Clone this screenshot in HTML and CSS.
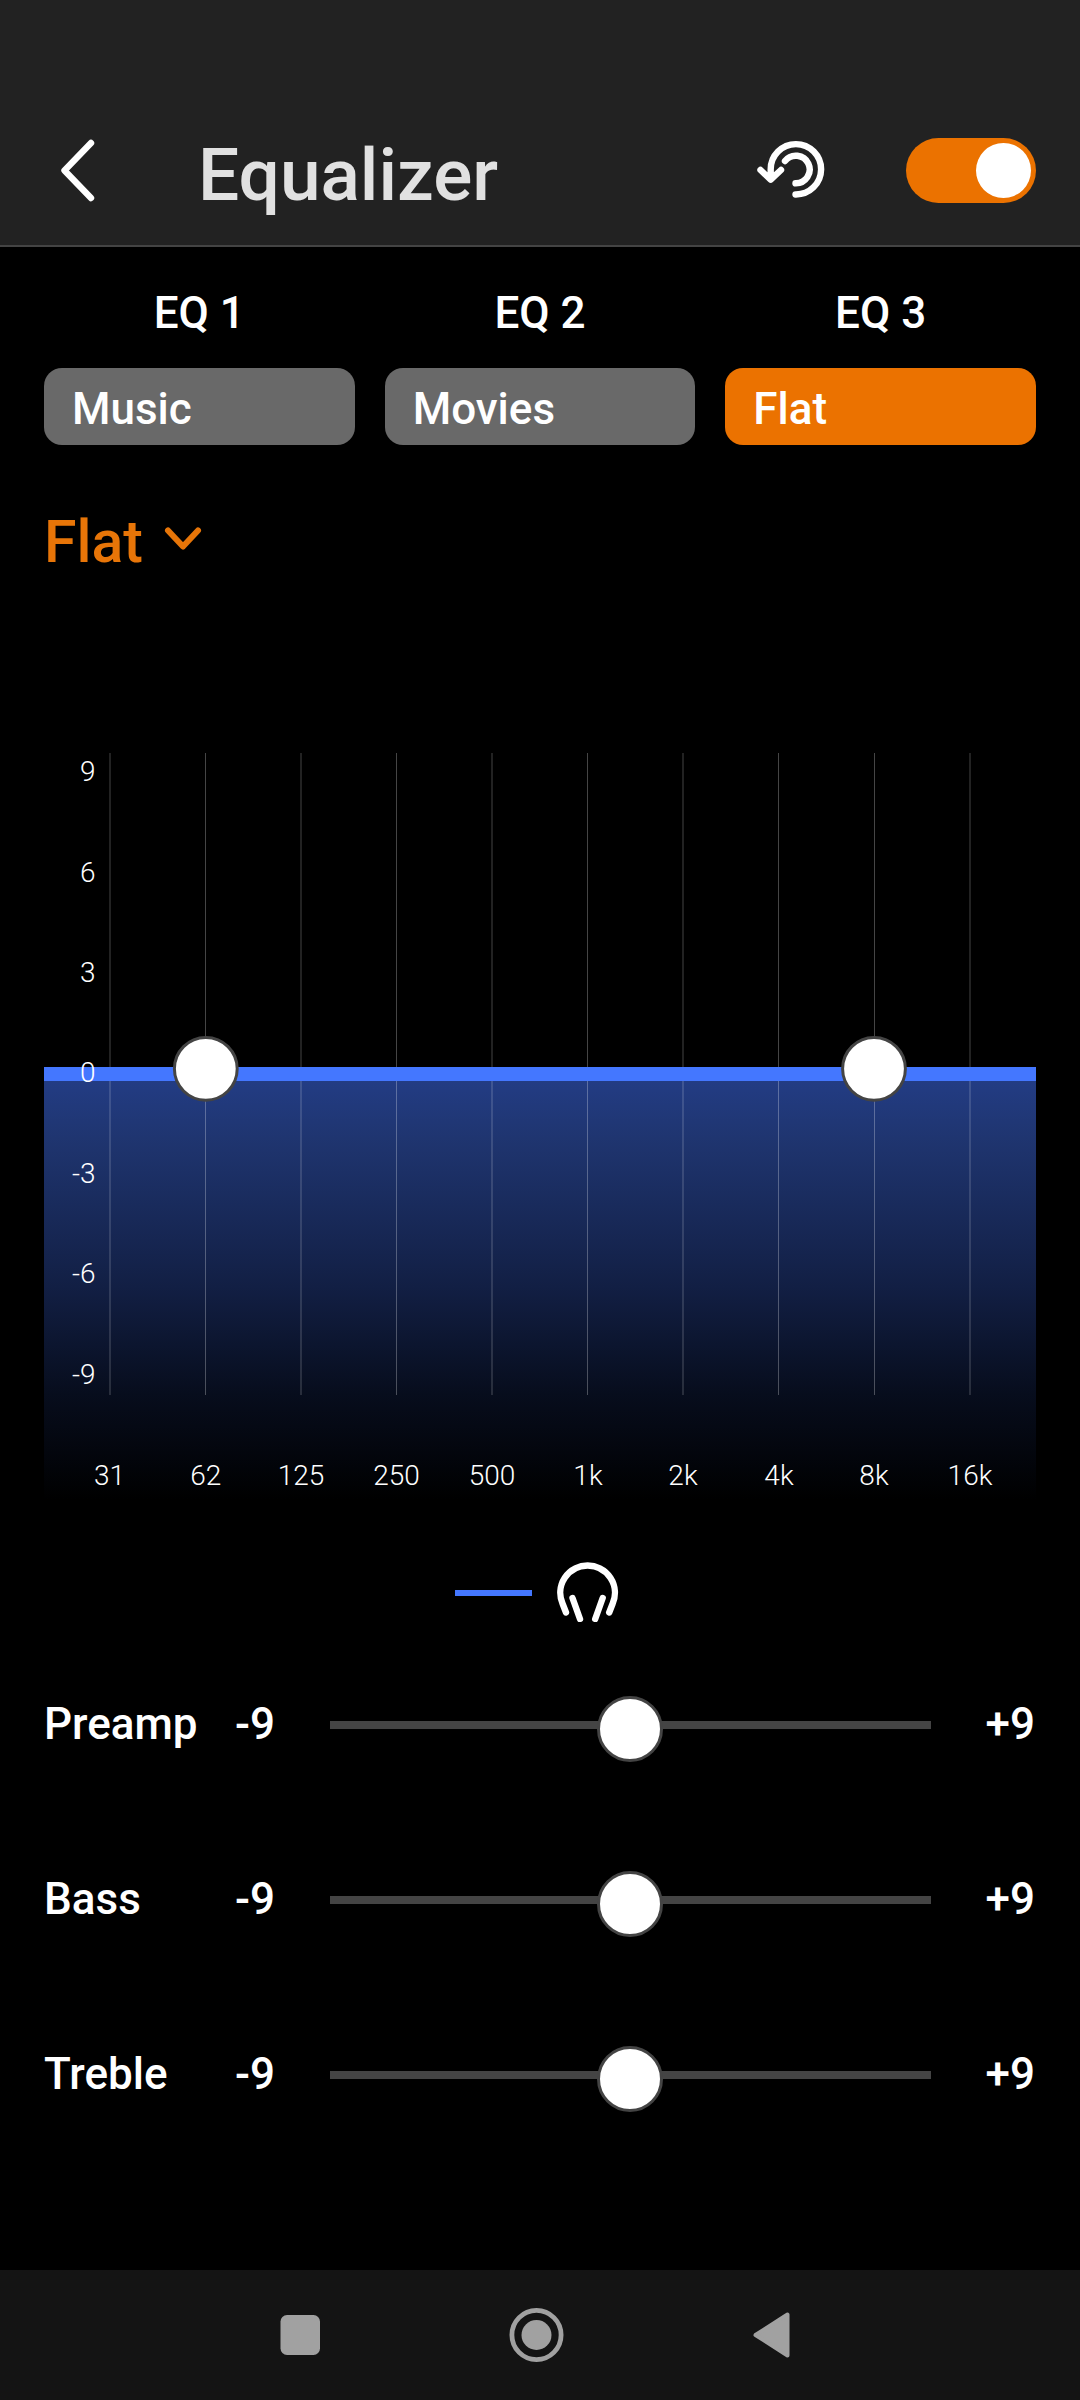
FILE: index.html
```html
<!DOCTYPE html>
<html lang="en">
<head>
<meta charset="utf-8">
<title>Equalizer</title>
<link rel="stylesheet" href="styles.css">
</head>
<body>
<header class="header">
  <svg class="back" viewBox="0 0 40 70" aria-label="Back"><path d="M31 8 4.500 35.500 31 63"/></svg>
  <h1 class="title">Equalizer</h1>
  <svg class="reset" viewBox="0 0 76 70" aria-label="Reset"><path d="M18.700 43V34.500A25.200 25.200 0 1 1 43.500 59.500M8.500 35l10.200 9.700L29 35M33 26A13.800 13.800 0 1 1 43.500 48.300"/></svg>
  <div class="toggle" role="switch" aria-checked="true"><span class="toggle-knob"></span></div>
</header>

<main class="main">
  <section class="slots">
    <div class="slot"><div class="slot-name">EQ 1</div><div class="chip">Music</div></div>
    <div class="slot"><div class="slot-name">EQ 2</div><div class="chip">Movies</div></div>
    <div class="slot"><div class="slot-name">EQ 3</div><div class="chip chip-active">Flat</div></div>
  </section>

  <div class="preset">
    <span>Flat</span>
    <svg class="caret" viewBox="0 0 38 26"><path d="M4 5.500 19 21.500 34 5.500"/></svg>
  </div>

  <svg class="chart" viewBox="44 740 992 760">
    <defs>
      <linearGradient id="fill" x1="0" y1="0" x2="0" y2="1">
        <stop offset="0" stop-color="#233d86"/>
        <stop offset=".15" stop-color="#1f3570"/>
        <stop offset=".5" stop-color="#121f44"/>
        <stop offset=".75" stop-color="#070d1d"/>
        <stop offset="1" stop-color="#000"/>
      </linearGradient>
    </defs>
    <rect x="44" y="1074" width="992" height="426" fill="url(#fill)"/>
    <path class="grid" d="M110 753V1395M205.500 753V1395M301 753V1395M396.500 753V1395M492 753V1395M587.500 753V1395M683 753V1395M778.500 753V1395M874.500 753V1395M970 753V1395"/>
    <rect x="44" y="1067" width="992" height="14" fill="#47f"/>
    <g class="gains">
      <text x="95.500" y="781">9</text>
      <text x="95.500" y="882">6</text>
      <text x="95.500" y="982">3</text>
      <text x="95.500" y="1082">0</text>
      <text x="95.500" y="1183">-3</text>
      <text x="95.500" y="1283">-6</text>
      <text x="95.500" y="1384">-9</text>
    </g>
    <g class="bands">
      <text x="109.500" y="1485">31</text>
      <text x="205.800" y="1485">62</text>
      <text x="301" y="1485">125</text>
      <text x="396.500" y="1485">250</text>
      <text x="492" y="1485">500</text>
      <text x="588" y="1485">1k</text>
      <text x="683" y="1485">2k</text>
      <text x="779" y="1485">4k</text>
      <text x="874" y="1485">8k</text>
      <text x="970" y="1485">16k</text>
    </g>
    <circle class="handle" cx="205.800" cy="1068.800" r="31.400"/>
    <circle class="handle" cx="874" cy="1068.800" r="31.400"/>
  </svg>

  <div class="legend">
    <span class="legend-line"></span>
    <svg class="headphones" viewBox="0 0 64 62"><path d="M11 52.500 7.500 43.500A27.300 27.300 0 1 1 57.700 43.500L54.200 52.500M17.500 38 25 59M47.700 38 40.200 59"/></svg>
  </div>

  <section class="sliders">
    <div class="row"><span>Preamp</span><span>-9</span><div class="track"><i class="thumb"></i></div><span class="max">+9</span></div>
    <div class="row"><span>Bass</span><span>-9</span><div class="track"><i class="thumb"></i></div><span class="max">+9</span></div>
    <div class="row"><span>Treble</span><span>-9</span><div class="track"><i class="thumb"></i></div><span class="max">+9</span></div>
  </section>
</main>

<nav class="navbar">
  <svg viewBox="0 0 60 60"><rect x="10.500" y="10" width="39.500" height="40" rx="6.500"/></svg>
  <svg viewBox="0 0 60 60"><circle class="ring" cx="30.500" cy="30" r="24.600"/><circle cx="30.500" cy="30" r="15"/></svg>
  <svg viewBox="0 0 60 60"><path class="tri" d="M14.500 30 46.500 9.500V50.500Z"/></svg>
</nav>
</body>
</html>
```
FILE: styles.css
```css
* { box-sizing: border-box; }

body {
  margin: 0;
  height: 2400px;
  display: flex;
  flex-direction: column;
  background: #000;
  color: #fff;
  font-family: Roboto, "Liberation Sans", sans-serif;
  font-size: 44px;
  font-weight: 500;
  line-height: 52px;
}

svg { display: block; }

.header {
  height: 247px;
  padding: 95px 44px 0 60px;
  display: flex;
  align-items: center;
  background: #222;
  border-bottom: 2px solid #444;
}

.back { width: 40px; height: 70px; }

.title {
  margin: 0 auto 0 98px;
  padding-top: 9px;
  font-size: 73px;
  font-weight: 500;
  line-height: 90px;
  color: #e1e1e1;
}

.reset { width: 76px; height: 70px; margin-right: 78px; }

.back path, .reset path, .caret path, .headphones path {
  fill: none;
  stroke: #fff;
  stroke-width: 6.4;
  stroke-linecap: round;
  stroke-linejoin: round;
}

.toggle {
  width: 130px;
  height: 65px;
  padding: 5px;
  display: flex;
  justify-content: flex-end;
  border-radius: 33px;
  background: #eb7200;
}

.toggle-knob { width: 55px; height: 55px; border-radius: 50%; background: #fff; }

.main { flex: 1; padding: 40px 44px 0; }

.slots { display: grid; grid-template-columns: repeat(3, 1fr); gap: 30px; }

.slot-name { margin-bottom: 29px; text-align: center; }

.chip {
  height: 77px;
  padding: 15px 28px 0;
  border-radius: 18px;
  background: #696969;
}

.chip-active { background: #eb7200; }

.preset {
  margin-top: 62px;
  display: flex;
  align-items: center;
  gap: 21px;
  font-size: 59px;
  line-height: 70px;
  color: #e77508;
}

.caret { width: 38px; height: 26px; margin-bottom: 8px; }
.caret path { stroke: #e77508; stroke-width: 6; }

.chart { width: 992px; height: 760px; margin-top: 163px; }

.grid { stroke: #fff; stroke-opacity: .27; stroke-width: 1; }

.gains, .bands {
  fill: #fff;
  font-size: 28px;
  font-weight: 300;
}

.gains { text-anchor: end; }
.bands { text-anchor: middle; }

.handle { fill: #fff; stroke: #444; stroke-width: 3; }

.legend {
  height: 137px;
  padding: 60px 0 0 411px;
  display: flex;
  gap: 23px;
}

.legend-line { width: 77px; height: 6px; margin-top: 30px; background: #47f; }

.headphones { width: 64px; height: 62px; }

.row {
  height: 175px;
  padding-bottom: 1px;
  display: grid;
  grid-template-columns: 191px 95px 601px 1fr;
  align-items: center;
}

.track {
  height: 8px;
  margin-top: 2px;
  display: flex;
  align-items: center;
  justify-content: center;
  background: #444;
}

.thumb {
  flex: none;
  width: 66px;
  height: 66px;
  margin: 8px 1px 0 0;
  border: 3px solid #444;
  border-radius: 50%;
  background: #fff;
}

.max { padding-right: 1px; text-align: right; }

.navbar {
  height: 130px;
  padding: 0 279px 0 270px;
  display: flex;
  align-items: center;
  justify-content: space-between;
  background: #141414;
}

.navbar svg { width: 60px; height: 60px; fill: #a1a1a1; }
.navbar .ring { fill: none; stroke: #a1a1a1; stroke-width: 4.8; }
.navbar .tri { stroke: #a1a1a1; stroke-width: 4; stroke-linejoin: round; }
```
